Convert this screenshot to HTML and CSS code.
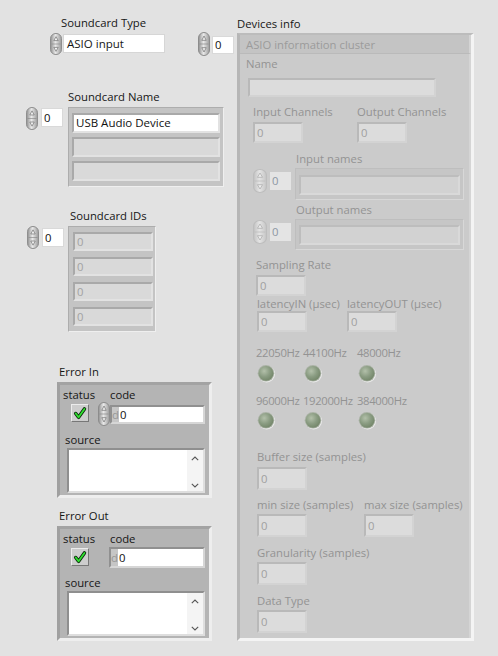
FILE: index.html
```html
<!DOCTYPE html>
<html>
<head>
<meta charset="utf-8">
<title>Soundcard panel</title>
<link rel="stylesheet" href="styles.css">
</head>
<body>
<svg class="defs" width="0" height="0" aria-hidden="true">
  <defs>
    <linearGradient id="spg" x1="0" x2="1" y1="0" y2="0">
      <stop offset="0" stop-color="#8f8f8f"/>
      <stop offset=".45" stop-color="#e9e9e9"/>
      <stop offset="1" stop-color="#9a9a9a"/>
    </linearGradient>
    <linearGradient id="spgd" x1="0" x2="1" y1="0" y2="0">
      <stop offset="0" stop-color="#c2c2c2"/>
      <stop offset=".45" stop-color="#e4e4e4"/>
      <stop offset="1" stop-color="#c6c6c6"/>
    </linearGradient>
    <radialGradient id="ledg" cx=".38" cy=".35" r=".7">
      <stop offset="0" stop-color="#b3c0aa"/>
      <stop offset=".55" stop-color="#8a9c82"/>
      <stop offset="1" stop-color="#728568"/>
    </radialGradient>
    <symbol id="spin" viewBox="0 0 12 24" preserveAspectRatio="none">
      <rect x=".5" y=".5" width="11" height="23" rx="5.5" fill="url(#spg)" stroke="#8c8c8c"/>
      <path d="M1.5 12h9" stroke="#8a8a8a" stroke-width=".7"/>
      <path d="M6 4l2.2 4.3h-4.4z" fill="#f2f2f2" stroke="#6e6e6e" stroke-width=".7"/>
      <path d="M6 20l2.2-4.3h-4.4z" fill="#f2f2f2" stroke="#6e6e6e" stroke-width=".7"/>
    </symbol>
    <symbol id="spind" viewBox="0 0 12 24" preserveAspectRatio="none">
      <rect x=".5" y=".5" width="11" height="23" rx="5.5" fill="url(#spgd)" stroke="#bdbdbd"/>
      <path d="M1.5 12h9" stroke="#bcbcbc" stroke-width=".7"/>
      <path d="M6 4l2.2 4.3h-4.4z" fill="#ececec" stroke="#acacac" stroke-width=".7"/>
      <path d="M6 20l2.2-4.3h-4.4z" fill="#ececec" stroke="#acacac" stroke-width=".7"/>
    </symbol>
    <symbol id="led" viewBox="0 0 20 20">
      <circle cx="10.6" cy="10" r="8.4" fill="#ececec"/>
      <circle cx="10" cy="9.3" r="8.3" fill="#a9b1a4"/>
      <circle cx="10" cy="9.3" r="7.4" fill="url(#ledg)"/>
    </symbol>
    <symbol id="chk" viewBox="0 0 18 18">
      <path d="M4.2 9.6l3.2 4.2 6.6-9.4" fill="none" stroke="#0c2a0c" stroke-width="4" stroke-linecap="round" stroke-linejoin="round"/>
      <path d="M4.2 9.6l3.2 4.2 6.6-9.4" fill="none" stroke="#2fe02f" stroke-width="2" stroke-linecap="round" stroke-linejoin="round"/>
    </symbol>
    <symbol id="up" viewBox="0 0 8 5"><path d="M.8 4.2L4 1l3.2 3.2" fill="none" stroke="#555" stroke-width="1.1"/></symbol>
    <symbol id="dn" viewBox="0 0 8 5"><path d="M.8 .8L4 4l3.2-3.2" fill="none" stroke="#555" stroke-width="1.1"/></symbol>
  </defs>
</svg>

<div class="panel">

  <!-- Soundcard Type -->
  <div class="ctl c-type">
    <div class="lbl">Soundcard Type</div>
    <div class="row">
      <svg class="spin"><use href="#spin"/></svg>
      <div class="ring">ASIO input</div>
    </div>
  </div>

  <!-- Soundcard Name -->
  <div class="ctl c-name">
    <div class="lbl">Soundcard Name</div>
    <div class="row">
      <svg class="spin s23"><use href="#spin"/></svg>
      <div class="idx">0</div>
      <div class="afr fr-name">
        <div class="ael ael-on">USB Audio Device</div>
        <div class="ael"></div>
        <div class="ael"></div>
      </div>
    </div>
  </div>

  <!-- Soundcard IDs -->
  <div class="ctl c-ids">
    <div class="lbl">Soundcard IDs</div>
    <div class="row">
      <svg class="spin s23"><use href="#spin"/></svg>
      <div class="idx">0</div>
      <div class="afr fr-ids">
        <div class="ael ael-id">0</div>
        <div class="ael ael-id">0</div>
        <div class="ael ael-id">0</div>
        <div class="ael ael-id">0</div>
      </div>
    </div>
  </div>

  <!-- Error In -->
  <div class="ctl c-errin">
    <div class="lbl">Error In</div>
    <div class="err err-h-in">
      <div class="err-top">
        <div class="st">
          <div class="lbl">status</div>
          <div class="ledbtn"><svg class="chk"><use href="#chk"/></svg></div>
        </div>
        <div class="cd">
          <div class="lbl cd-lbl">code</div>
          <div class="row">
            <svg class="spin s-code"><use href="#spin"/></svg>
            <div class="codebox cb-in"><span class="radix">d</span><span class="cv">0</span></div>
          </div>
        </div>
      </div>
      <div class="lbl src-lbl src-in">source</div>
      <div class="srcbox"><div class="sbar"><svg class="chev"><use href="#up"/></svg><svg class="chev"><use href="#dn"/></svg></div></div>
    </div>
  </div>

  <!-- Error Out -->
  <div class="ctl c-errout">
    <div class="lbl">Error Out</div>
    <div class="err err-h-out">
      <div class="err-top">
        <div class="st">
          <div class="lbl">status</div>
          <div class="ledbtn"><svg class="chk"><use href="#chk"/></svg></div>
        </div>
        <div class="cd">
          <div class="lbl cd-lbl">code</div>
          <div class="row">
            <div class="codebox cb-out"><span class="radix">d</span><span class="cv">0</span></div>
          </div>
        </div>
      </div>
      <div class="lbl src-lbl src-out">source</div>
      <div class="srcbox"><div class="sbar"><svg class="chev"><use href="#up"/></svg><svg class="chev"><use href="#dn"/></svg></div></div>
    </div>
  </div>

  <!-- Devices info -->
  <div class="ctl c-dev">
    <div class="lbl">Devices info</div>
    <div class="row">
      <svg class="spin s-dev"><use href="#spin"/></svg>
      <div class="idx idx-dev">0</div>
      <div class="dcl">
        <div class="dhead">ASIO information cluster</div>
        <div class="dbody">
          <div class="lbl dl l-name">Name</div>
          <div class="dbox d-name"></div>

          <div class="drow r-ch">
            <div class="fld w-ch"><div class="lbl dl">Input Channels</div><div class="dbox">0</div></div>
            <div class="fld"><div class="lbl dl">Output Channels</div><div class="dbox">0</div></div>
          </div>

          <div class="lbl dl l-arr l-in">Input names</div>
          <div class="drow r-arr">
            <svg class="spin s-darr"><use href="#spind"/></svg>
            <div class="didx">0</div>
            <div class="dafr"><div class="dael"></div></div>
          </div>

          <div class="lbl dl l-arr l-out">Output names</div>
          <div class="drow r-arr">
            <svg class="spin s-darr"><use href="#spind"/></svg>
            <div class="didx">0</div>
            <div class="dafr dafr-out"><div class="dael"></div></div>
          </div>

          <div class="fld f-sr"><div class="lbl dl">Sampling Rate</div><div class="dbox">0</div></div>

          <div class="drow r-lat">
            <div class="fld w-lat"><div class="lbl dl">latencyIN (µsec)</div><div class="dbox b0">0</div></div>
            <div class="fld"><div class="lbl dl">latencyOUT (µsec)</div><div class="dbox b0">0</div></div>
          </div>

          <div class="leds leds1">
            <div class="lc"><div class="lbl dl">22050Hz</div><svg class="led"><use href="#led"/></svg></div>
            <div class="lc"><div class="lbl dl">44100Hz</div><svg class="led"><use href="#led"/></svg></div>
            <div class="lc"><div class="lbl dl">48000Hz</div><svg class="led"><use href="#led"/></svg></div>
          </div>
          <div class="leds leds2">
            <div class="lc"><div class="lbl dl">96000Hz</div><svg class="led"><use href="#led"/></svg></div>
            <div class="lc"><div class="lbl dl">192000Hz</div><svg class="led"><use href="#led"/></svg></div>
            <div class="lc"><div class="lbl dl">384000Hz</div><svg class="led"><use href="#led"/></svg></div>
          </div>

          <div class="fld f-buf"><div class="lbl dl">Buffer size (samples)</div><div class="dbox tall">0</div></div>

          <div class="drow r-mm">
            <div class="fld w-mm"><div class="lbl dl">min size (samples)</div><div class="dbox tall b2">0</div></div>
            <div class="fld"><div class="lbl dl">max size (samples)</div><div class="dbox tall b2">0</div></div>
          </div>

          <div class="fld f-gr"><div class="lbl dl">Granularity (samples)</div><div class="dbox tall b2">0</div></div>
          <div class="fld f-gr"><div class="lbl dl">Data Type</div><div class="dbox tall b2">0</div></div>
        </div>
      </div>
    </div>
  </div>

</div>
</body>
</html>
```

FILE: styles.css
```css
* { box-sizing: border-box; }
html, body { margin: 0; padding: 0; }
body {
  background: #e2e2e2;
  font-family: "Open Sans", "Noto Sans", "Liberation Sans", sans-serif;
  font-size: 11.3px;
  color: #161616;
}
.defs { position: absolute; width: 0; height: 0; }
.panel { position: relative; width: 498px; height: 656px; overflow: hidden; background: #e2e2e2; }
.ctl { position: absolute; }
.lbl { line-height: 14px; height: 14px; white-space: nowrap; }
.row { display: flex; align-items: flex-start; }
.spin { display: block; flex: none; width: 12px; height: 22px; }
.s23 { height: 23px; }

/* Soundcard Type */
.c-type { left: 50px; top: 16px; }
.c-type > .lbl { margin-left: 11px; }
.c-type .row { margin-top: 3px; }
.ring {
  margin: 1px 0 0 1px; width: 102px; height: 19px; background: #fff;
  border: 1px solid #d6d6d6; padding-left: 3px; line-height: 17px; font-size: 11.5px;
}

/* index boxes */
.idx {
  width: 22px; height: 19px; background: #fff; border: 1px solid #d9d9d9;
  padding-left: 2px; line-height: 17px; color: #101010;
}

/* array frames */
.afr {
  background: #c4c4c4; border: 1px solid; border-color: #adadad #efefef #efefef #adadad;
  padding: 5px 0 0 3px;
}
.ael {
  height: 20px; margin-bottom: 4px; background: #d9d9d9;
  border: 2px solid; border-color: #a9a9a9 #e2e2e2 #e2e2e2 #a9a9a9;
  padding-left: 2px; line-height: 16px; color: #a2a2a2;
}
.ael-on { background: #fff; color: #111; font-size: 11.5px; }

.c-name { left: 26px; top: 90px; }
.c-name > .lbl { margin-left: 42px; }
.c-name .row { margin-top: 3px; }
.c-name .idx { margin: 1px 0 0 3px; }
.fr-name { margin-left: 5px; width: 156px; height: 80px; }
.fr-name .ael { width: 148px; }

.c-ids { left: 27px; top: 209px; }
.c-ids > .lbl { margin-left: 43px; }
.c-ids .row { margin-top: 3px; }
.c-ids .idx { margin: 2px 0 0 3px; }
.fr-ids { margin-left: 4px; width: 88px; height: 106px; padding-left: 4px; }
.ael-id { width: 80px; height: 19px; margin-bottom: 6px; line-height: 15px; }

/* error clusters */
.c-errin { left: 57px; top: 365px; }
.c-errout { left: 57px; top: 509px; }
.c-errin > .lbl, .c-errout > .lbl { margin-left: 2px; }
.err {
  margin-top: 3px; width: 155px; background: #b4b4b4;
  border: 3px solid; border-color: #a3a3a3 #eeeeee #eeeeee #a0a0a0;
  padding: 3px 0 0 3px;
}
.err-h-in { height: 116px; }
.err-h-out { height: 115px; }
.err-top { display: flex; align-items: flex-start; }
.st { width: 35px; flex: none; }
.ledbtn {
  margin: 2px 0 0 8px; width: 18px; height: 18px; background: #cdcdcd;
  border: 1px solid; border-color: #ececec #777 #777 #ececec;
  display: flex; align-items: center; justify-content: center;
}
.chk { width: 16px; height: 16px; display: block; }
.cd-lbl { margin-left: 12px; }
.s-code { width: 12px; height: 24px; }
.codebox {
  display: flex; background: #fff; border: 2px solid;
  border-color: #909090 #d6d6d6 #d6d6d6 #909090; line-height: 15px;
}
.cb-in { margin-top: 3px; width: 95px; height: 19px; }
.cb-out { margin: 1px 0 0 11px; width: 96px; height: 21px; line-height: 17px; }
.radix { width: 7px; background: #c6c6c6; color: #969696; text-align: center; flex: none; }
.cv { padding-left: 1px; color: #111; }
.src-lbl { margin-left: 2px; }
.src-in { margin-top: 7px; }
.src-out { margin-top: 8px; }
.srcbox {
  margin: 1px 0 0 4px; width: 138px; height: 45px; background: #fff;
  border: 2px solid; border-color: #8f8f8f #dedede #dedede #8f8f8f;
  display: flex; justify-content: flex-end;
}
.sbar {
  width: 16px; background: #f4f4f4; display: flex; flex-direction: column;
  justify-content: space-between; align-items: center; padding: 6px 0 3px;
}
.chev { width: 8px; height: 5px; display: block; }

/* Devices info */
.c-dev { left: 198px; top: 17px; }
.c-dev > .lbl { margin-left: 39px; }
.c-dev > .row { margin-top: 1px; }
.s-dev { width: 12px; height: 24px; }
.idx-dev { margin: 4px 0 0 2px; height: 18px; line-height: 16px; }
.dcl {
  margin: 1px 0 0 3px; width: 237px; height: 608px;
  border-style: solid; border-width: 2px 3px 3px 3px;
  border-color: #bcbcbc #f4f4f4 #f4f4f4 #b6b6b6;
  background: #cbcbcb; display: flex; flex-direction: column;
}
.dhead {
  height: 19px; background: #c4c4c4; border-bottom: 1px solid #bababa;
  border-right: 2px solid #d4d4d4;
  color: #9b9b9b; padding: 1px 0 0 6px; line-height: 17px; white-space: nowrap;
}
.dbody { flex: 1; padding-top: 3px; color: #939393; border-right: 2px solid #d5d5d5; }
.dl { color: #939393; }
.drow { display: flex; align-items: flex-start; }
.dbox {
  width: 50px; height: 21px; margin-top: 3px; background: #dcdcdc;
  border: 2px solid; border-color: #b9b9b9 #d3d3d3 #d3d3d3 #b9b9b9;
  padding-left: 2px; line-height: 17px; color: #a0a0a0;
}
.dbox.tall { height: 23px; line-height: 19px; }
.dbox.b0 { margin-top: 0; }
.dbox.b2 { margin-top: 2px; }
.l-name { margin-left: 6px; }
.d-name { width: 188px; height: 19px; margin: 7px 0 0 8px; }
.r-ch { margin-top: 8px; padding-left: 13px; }
.w-ch { width: 104px; }
.l-arr { margin-left: 56px; }
.l-in { margin-top: 9px; }
.l-out { margin-top: 3px; }
.r-arr { margin-top: 2px; padding-left: 13px; }
.s-darr { width: 14px; height: 24px; margin-top: 1px; }
.didx {
  margin: 4px 0 0 3px; width: 21px; height: 18px; background: #e4e4e4;
  padding-left: 2px; line-height: 18px; color: #8c97a3;
}
.dafr {
  margin-left: 4px; width: 169px; height: 32px; background: #c6c6c6;
  border: 1px solid; border-color: #bebebe #d8d8d8 #d8d8d8 #bebebe; padding: 6px 0 0 3px;
}
.dafr-out { height: 31px; padding-top: 5px; }
.dael {
  width: 161px; height: 20px; background: #d2d2d2;
  border: 2px solid; border-color: #bdbdbd #d9d9d9 #d9d9d9 #bdbdbd;
}
.fld { flex: none; }
.f-sr { margin: 8px 0 0 16px; }
.r-lat { margin-top: 1px; padding-left: 17px; }
.w-lat { width: 90px; }
.leds { display: grid; grid-template-columns: 47px 54px auto; padding-left: 16px; }
.leds .lbl { letter-spacing: -0.35px; }
.leds1 { margin-top: 14px; }
.leds2 { margin-top: 10px; }
.led { display: block; width: 20px; height: 20px; margin-top: 4px; }
.leds2 .led { margin-top: 3px; }
.f-buf { margin: 19px 0 0 17px; }
.r-mm { margin-top: 8px; padding-left: 17px; }
.w-mm { width: 107px; }
.f-gr { margin: 9px 0 0 17px; }
```
